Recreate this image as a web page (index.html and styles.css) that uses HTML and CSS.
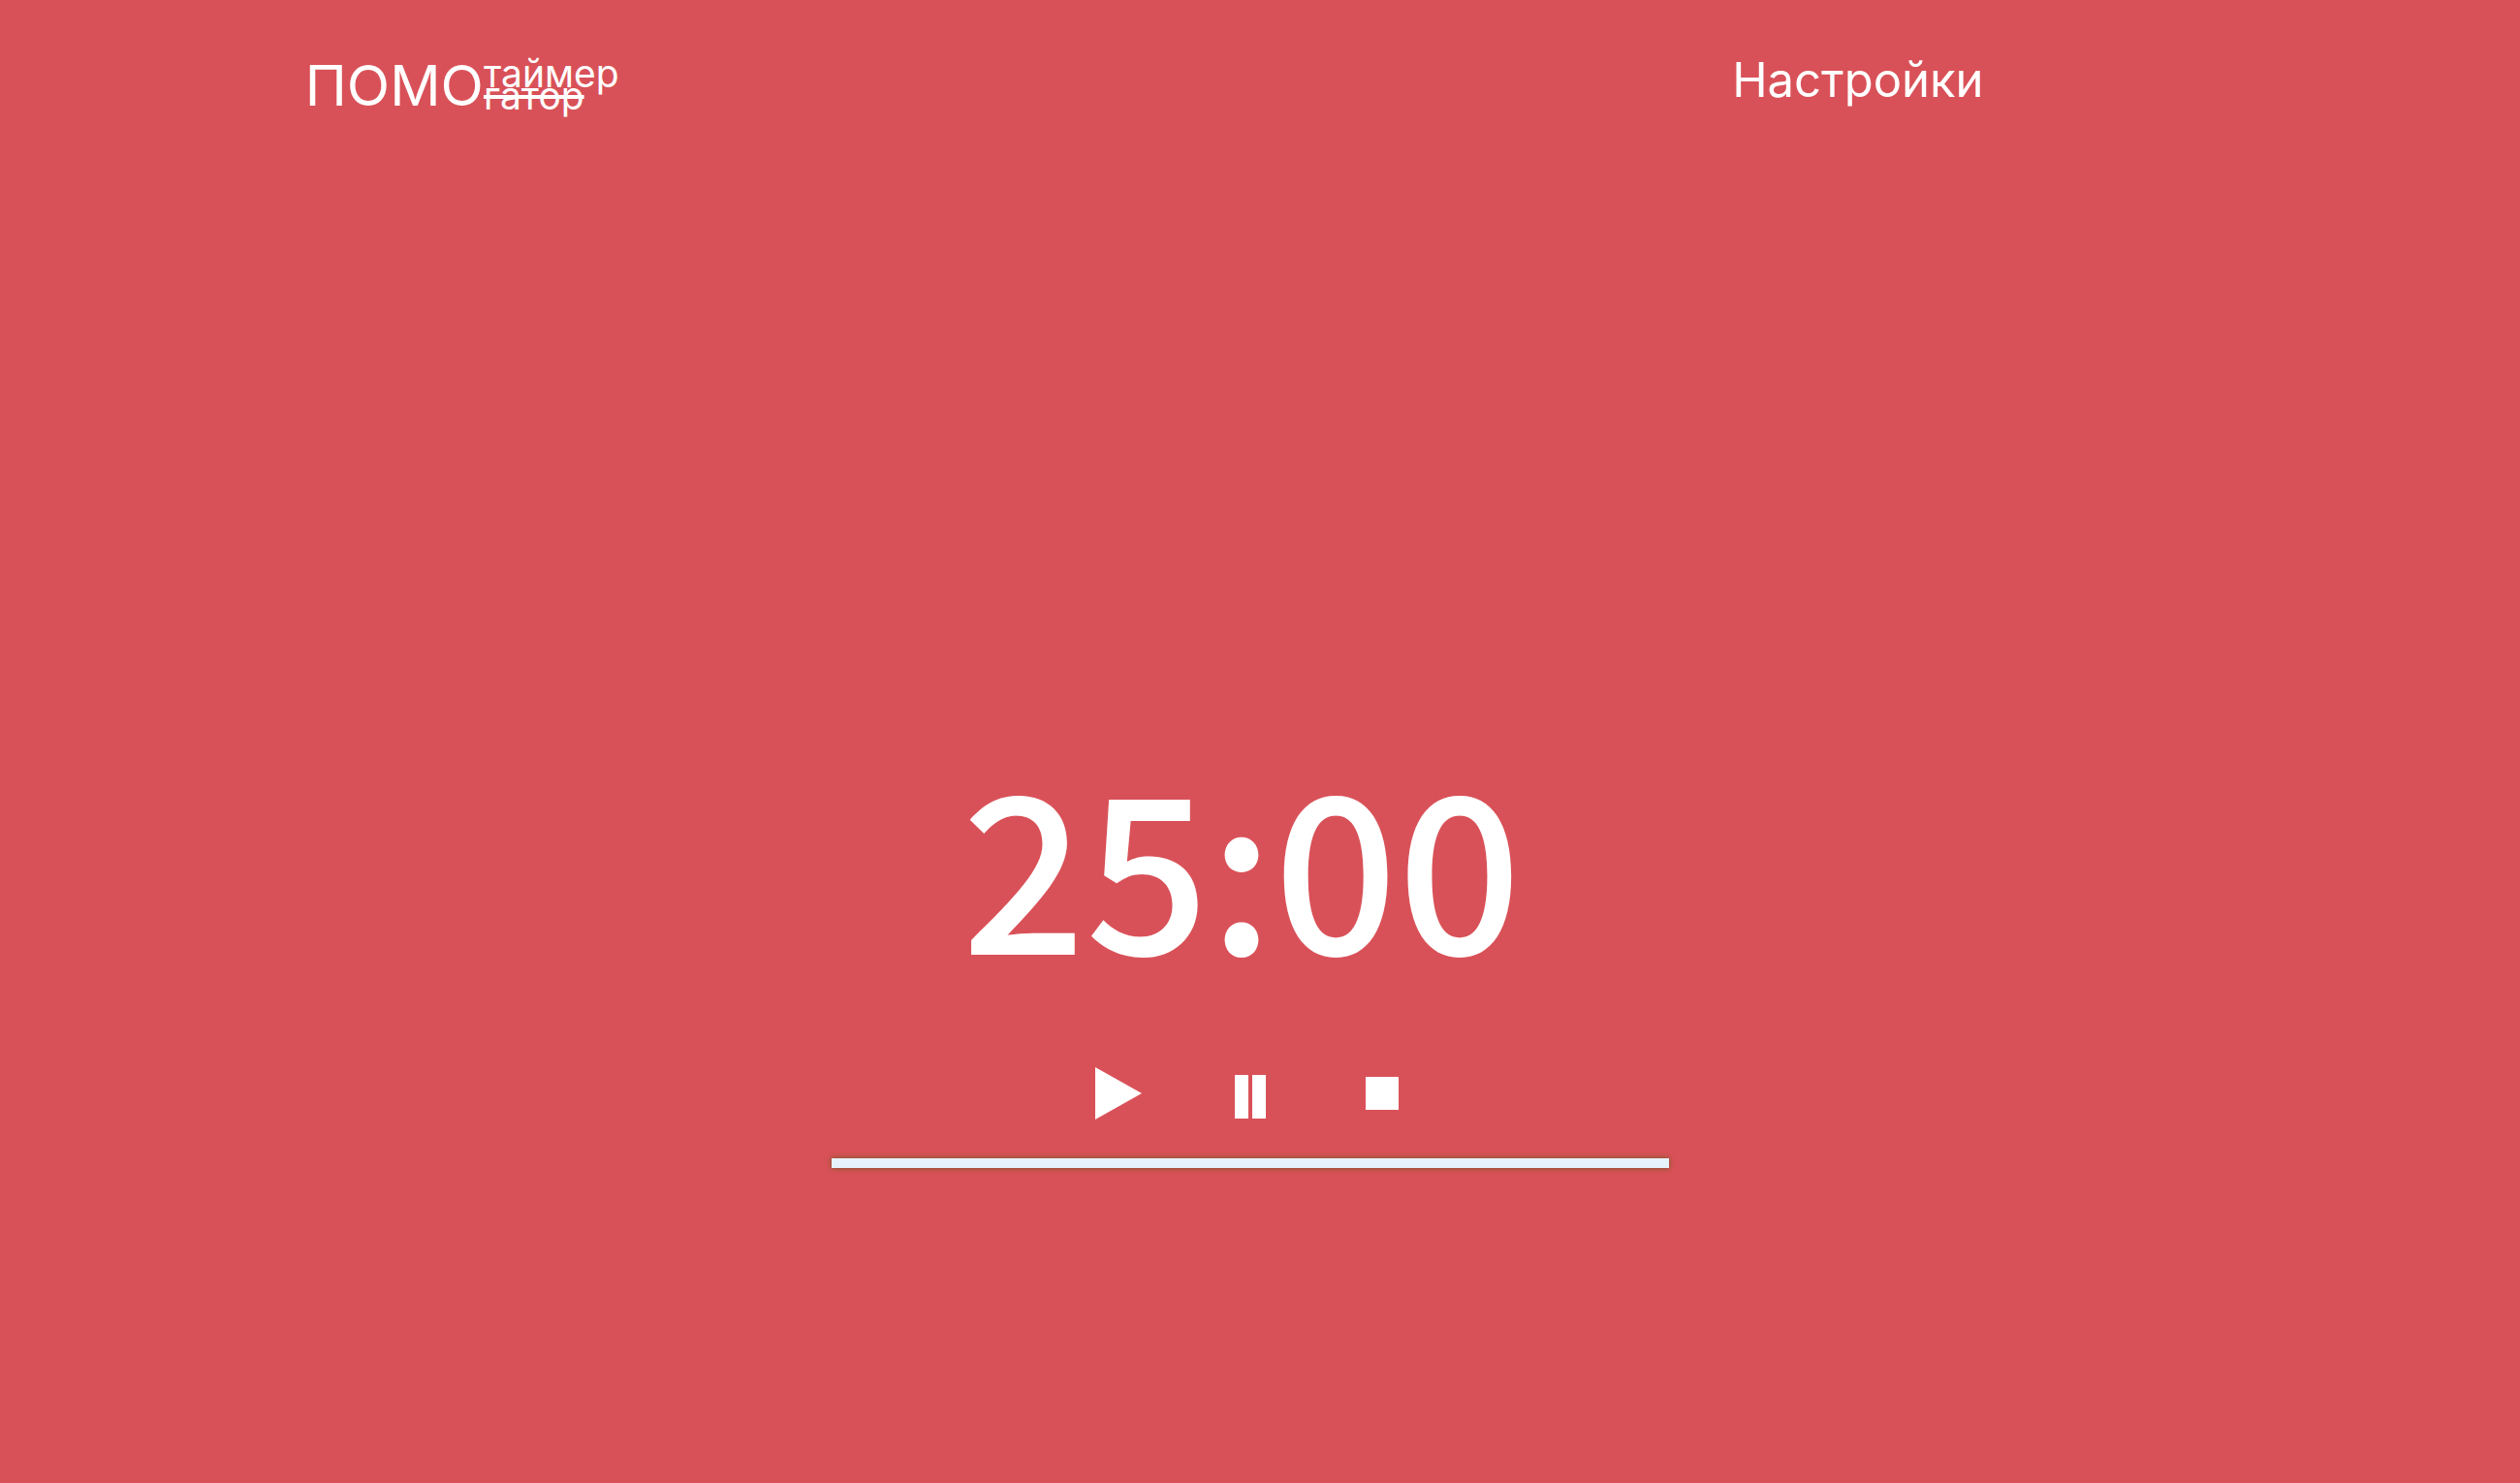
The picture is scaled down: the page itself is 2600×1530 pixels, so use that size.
FILE: index.html
```html
<!DOCTYPE html>
<html lang="ru">
<head>
  <meta charset="utf-8">
  <meta name="viewport" content="width=device-width, initial-scale=1">
  <title>Помотаймер</title>
  <link rel="stylesheet" href="styles.css">
</head>
<body>
  <header class="header">
    <a class="logo" href="#">
      <span class="logo-main">ПОМО</span>
      <span class="logo-side">
        <span class="logo-word">таймер</span>
        <s class="logo-word logo-word-struck">гатор</s>
      </span>
    </a>
    <nav class="nav"><a class="nav-link" href="#">Настройки</a></nav>
  </header>
  <main class="timer">
    <div class="time" role="timer">25:00</div>
    <div class="controls">
      <button class="control" type="button" aria-label="Старт">
        <svg width="48" height="54" viewBox="0 0 48 54"><path d="M0 0L48 27L0 54Z"/></svg>
      </button>
      <button class="control" type="button" aria-label="Пауза">
        <svg width="32" height="51" viewBox="0 0 32 51"><path d="M0 6H14V51H0ZM18 6H32V51H18Z"/></svg>
      </button>
      <button class="control" type="button" aria-label="Стоп">
        <svg width="34" height="34" viewBox="0 0 34 34"><path d="M0 0H34V34H0Z"/></svg>
      </button>
    </div>
    <progress class="progress" aria-label="Прогресс" value="0" max="100"></progress>
  </main>
</body>
</html>
```
FILE: styles.css
```css
* {
  box-sizing: border-box;
}

body {
  margin: 0;
  padding-right: 20px;
  min-height: 100vh;
  background: #d95158;
  color: #fff;
  font-family: Inter, sans-serif;
}

.header {
  display: grid;
  grid-template-columns: 65fr 35fr;
  align-items: start;
  padding: 56px 0 0 12.2%;
}

.logo {
  display: flex;
  align-items: flex-start;
  color: inherit;
  text-decoration: none;
}

.logo-main {
  font-size: 58px;
  line-height: 64px;
}

.logo-side {
  display: grid;
  justify-items: start;
  margin-top: 8px;
}

.logo-word {
  font-size: 39px;
  line-height: 23px;
}

.logo-word-struck {
  text-decoration-thickness: 4px;
}

.nav {
  display: flex;
}

.nav-link {
  color: inherit;
  font-size: 49px;
  line-height: 54px;
  text-decoration: none;
}

.timer {
  display: flex;
  flex-direction: column;
  align-items: center;
  width: 864px;
  max-width: 100%;
  margin: 0 auto;
  padding-top: 648px;
}

.time {
  padding-right: 18px;
  font-family: "Noto Sans CJK SC", sans-serif;
  font-size: 224px;
  font-weight: 500;
  line-height: 240px;
}

.controls {
  display: flex;
  align-items: center;
  gap: 88px;
  margin-top: 93px;
}

.control {
  display: flex;
  justify-content: center;
  width: 48px;
  padding: 0;
  border: 0;
  background: none;
  color: inherit;
  cursor: pointer;
}

.control svg {
  fill: currentColor;
}

.progress {
  display: block;
  width: 100%;
  height: 10px;
  margin-top: 40px;
  border: 0;
  appearance: none;
  background: #e6f2fc;
  box-shadow: 0 0 6px #6b5a20;
}

.progress::-webkit-progress-bar {
  background: #e6f2fc;
}
```
